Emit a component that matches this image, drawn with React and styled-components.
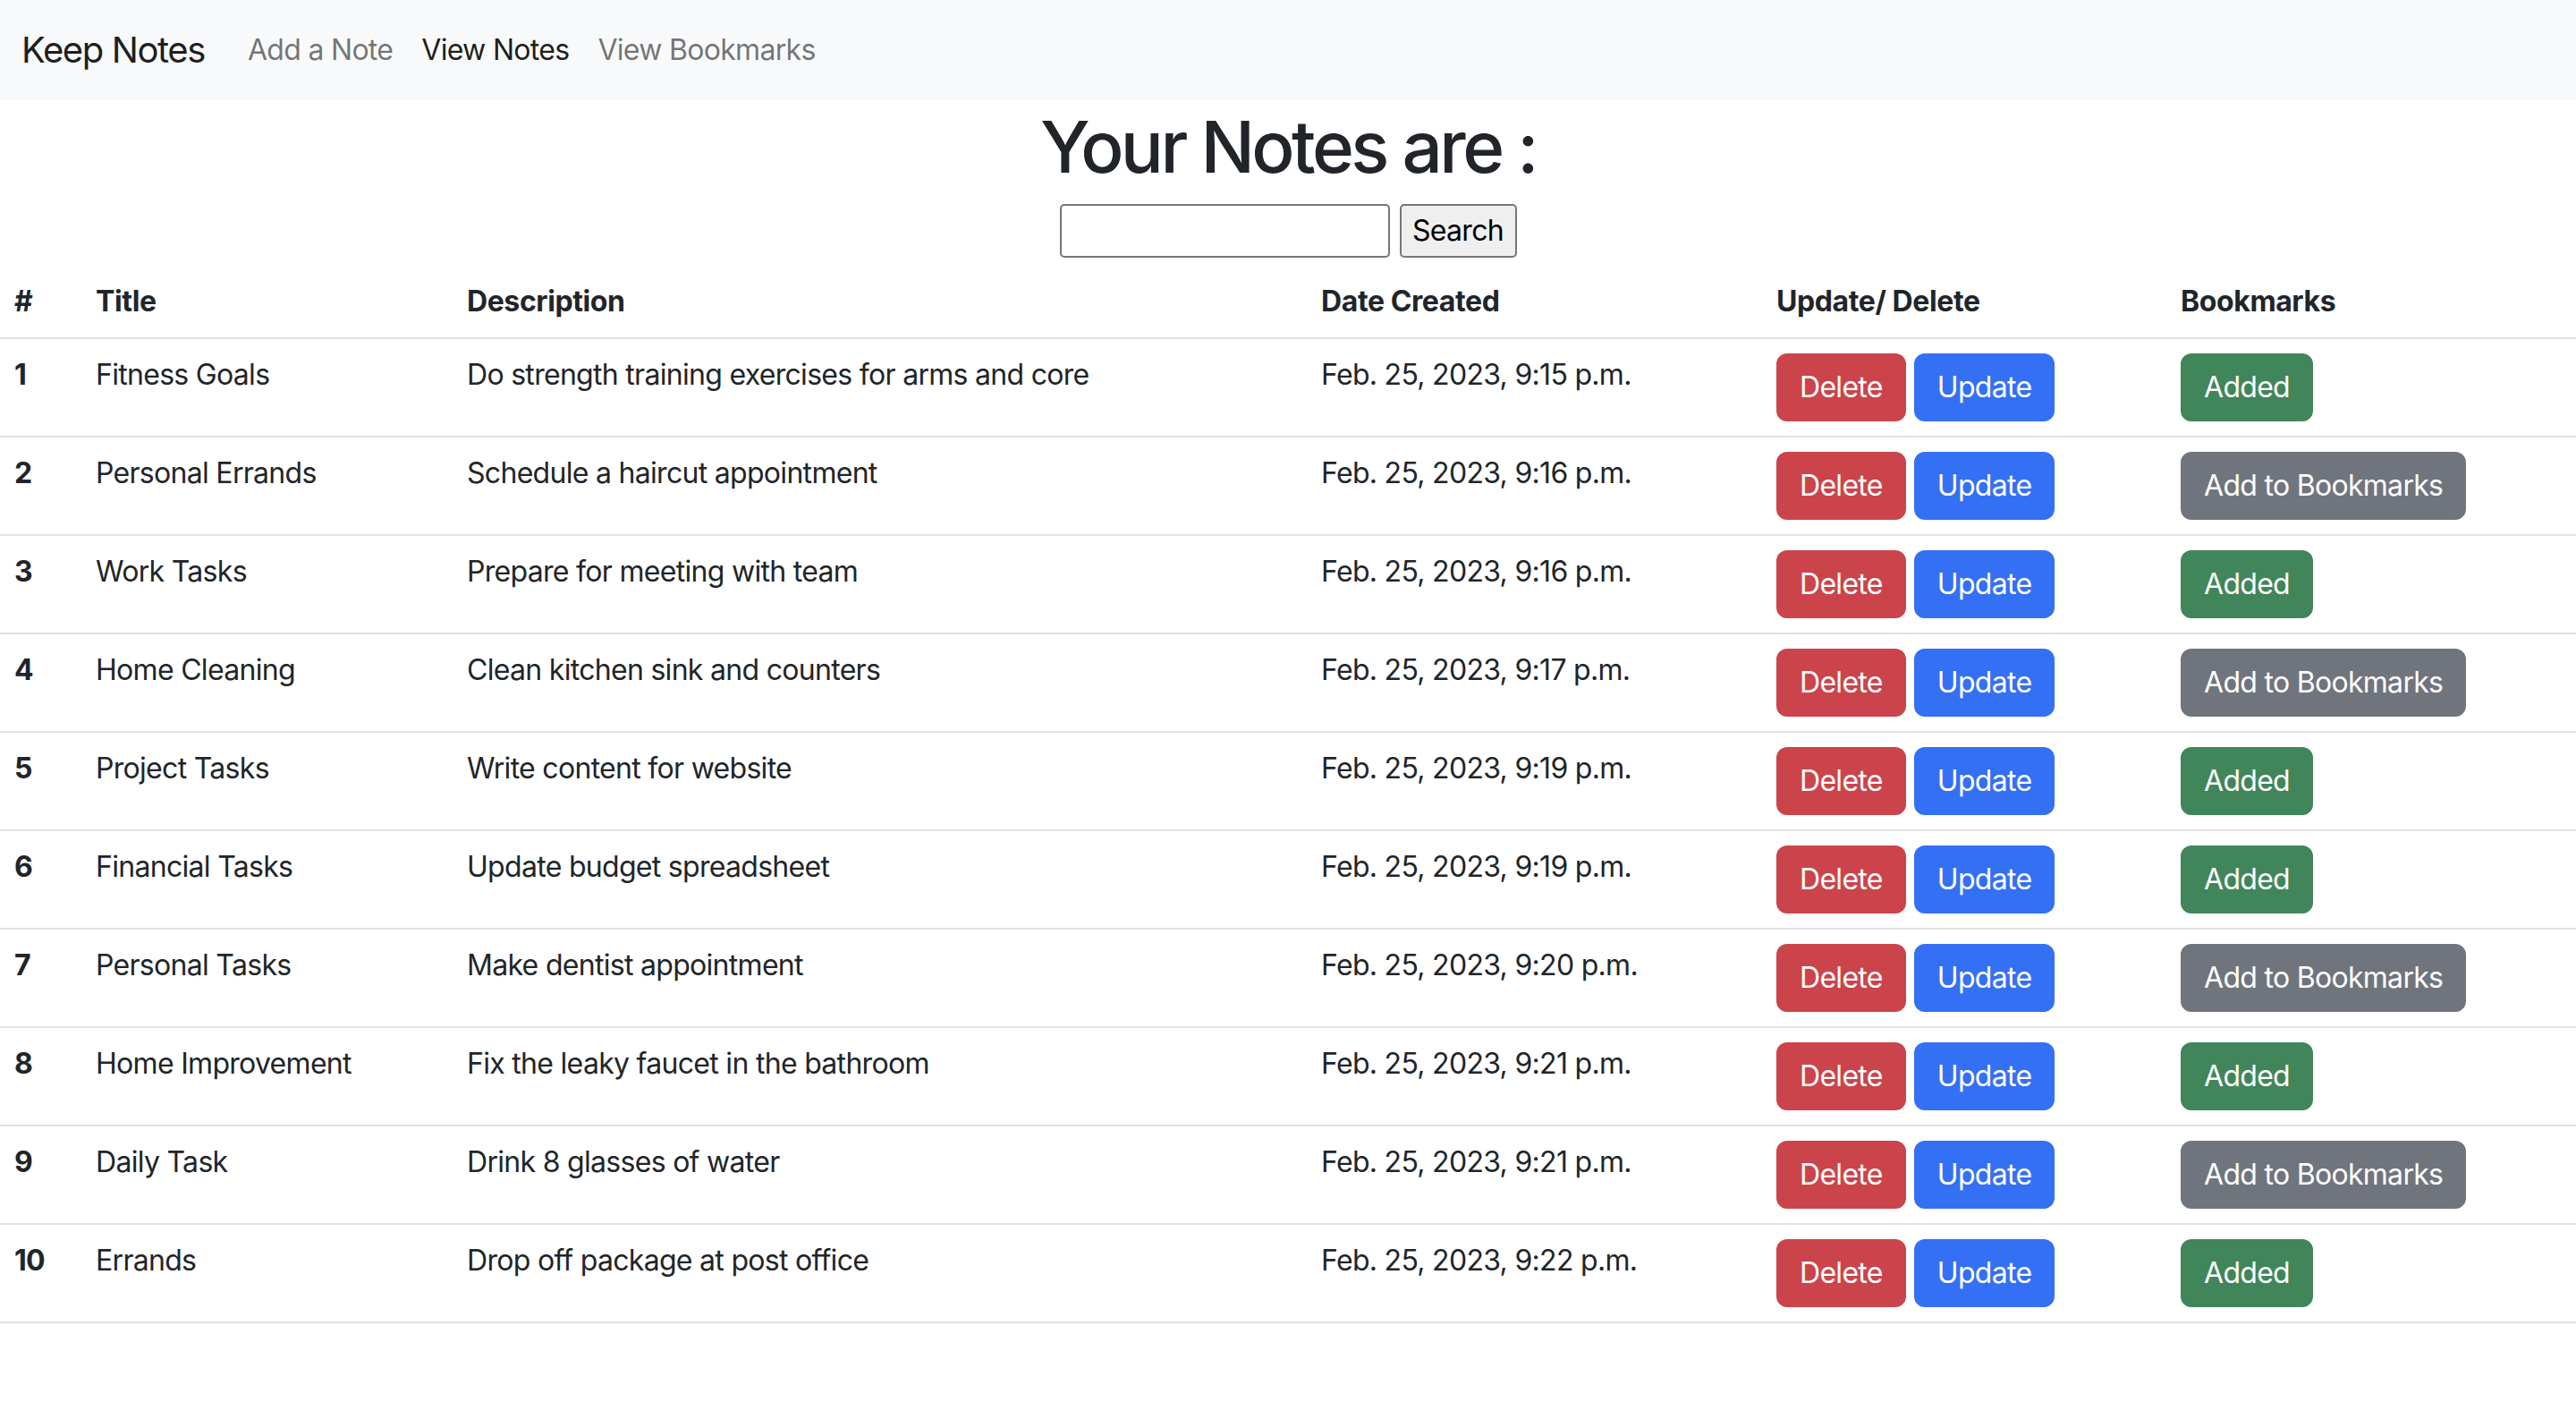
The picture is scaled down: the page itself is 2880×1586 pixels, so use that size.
import React from "react";
import styled, { createGlobalStyle } from "styled-components";

const Global = createGlobalStyle`
  html, body { margin: 0; padding: 0; background: #fff; }
  body {
    font-family: Inter, "Noto Sans", "Liberation Sans", sans-serif;
    font-size: 32px;
    line-height: 1.5;
    letter-spacing: -0.7px;
    color: #212529;
  }
  * { box-sizing: border-box; }
`;

const Navbar = styled.nav`
  display: flex;
  align-items: center;
  background: #f8f9fa;
  padding: 16px 24px;
  height: 112px;
`;

const Brand = styled.a`
  font-size: 40px;
  line-height: 60px;
  letter-spacing: -1.4px;
  padding: 10px 0;
  margin-right: 32px;
  color: rgba(0, 0, 0, 0.9);
  text-decoration: none;
`;

const NavList = styled.div`
  display: flex;
`;

const NavLink = styled.a`
  padding: 16px 16px;
  color: ${(p) => (p.$active ? "rgba(0,0,0,0.9)" : "rgba(0,0,0,0.55)")};
  text-decoration: none;
  line-height: 48px;
`;

const Heading = styled.h1`
  margin: 4px 0 16px;
  font-size: 80px;
  font-weight: 500;
  line-height: 1.2;
  letter-spacing: -3.6px;
  text-align: center;
`;

const SearchForm = styled.form`
  display: flex;
  justify-content: center;
  gap: 11px;
  margin-top: 11px;
  margin-bottom: 9px;
`;

const SearchInput = styled.input`
  width: 369px;
  height: 60px;
  border: 2px solid #767676;
  border-radius: 5px;
  padding: 2px 4px;
  font: inherit;
  background: #fff;
`;

const SearchButton = styled.button`
  width: 131px;
  height: 60px;
  border: 2px solid #767676;
  border-radius: 5px;
  background: #efefef;
  color: #000;
  font-family: inherit;
  font-size: 32px;
  letter-spacing: -0.7px;
  line-height: 1;
  padding: 0 10px;
`;

const Table = styled.table`
  width: 100%;
  border-collapse: collapse;
  table-layout: fixed;
  vertical-align: top;
`;

const Th = styled.th`
  text-align: left;
  font-weight: 700;
  letter-spacing: -0.4px;
  padding: 16px;
  line-height: 48px;
  border-bottom: 2px solid #dee2e6;
  vertical-align: bottom;
`;

const Td = styled.td`
  padding: 16px;
  line-height: 48px;
  border-bottom: 2px solid #dee2e6;
  vertical-align: top;
  font-weight: ${(p) => (p.$bold ? 700 : 400)};
  white-space: nowrap;
`;

const Actions = styled.div`
  display: flex;
  gap: 9px;
`;

const COLORS = {
  danger: "#cb444b",
  primary: "#3470f3",
  success: "#41865a",
  secondary: "#70757d",
};

const Btn = styled.button`
  font-family: inherit;
  font-size: 32px;
  line-height: 48px;
  letter-spacing: -0.7px;
  padding: 12px 24px;
  border: 2px solid ${(p) => COLORS[p.$variant]};
  background: ${(p) => COLORS[p.$variant]};
  color: #fff;
  border-radius: 12px;
  cursor: pointer;
`;

const notes = [
  ["Fitness Goals", "Do strength training exercises for arms and core", "9:15", true],
  ["Personal Errands", "Schedule a haircut appointment", "9:16", false],
  ["Work Tasks", "Prepare for meeting with team", "9:16", true],
  ["Home Cleaning", "Clean kitchen sink and counters", "9:17", false],
  ["Project Tasks", "Write content for website", "9:19", true],
  ["Financial Tasks", "Update budget spreadsheet", "9:19", true],
  ["Personal Tasks", "Make dentist appointment", "9:20", false],
  ["Home Improvement", "Fix the leaky faucet in the bathroom", "9:21", true],
  ["Daily Task", "Drink 8 glasses of water", "9:21", false],
  ["Errands", "Drop off package at post office", "9:22", true],
];

const widths = [91, 415, 955, 509, 452, 458];

export default function App() {
  return (
    <>
      <Global />
      <Navbar>
        <Brand href="#">Keep Notes</Brand>
        <NavList>
          <NavLink href="#">Add a Note</NavLink>
          <NavLink href="#" $active>View Notes</NavLink>
          <NavLink href="#">View Bookmarks</NavLink>
        </NavList>
      </Navbar>
      <Heading>Your Notes are :</Heading>
      <SearchForm onSubmit={(e) => e.preventDefault()}>
        <SearchInput type="text" />
        <SearchButton type="submit">Search</SearchButton>
      </SearchForm>
      <Table>
        <colgroup>
          {widths.map((w, i) => (
            <col key={i} style={{ width: w }} />
          ))}
        </colgroup>
        <thead>
          <tr>
            <Th>#</Th>
            <Th>Title</Th>
            <Th>Description</Th>
            <Th>Date Created</Th>
            <Th>Update/ Delete</Th>
            <Th>Bookmarks</Th>
          </tr>
        </thead>
        <tbody>
          {notes.map(([title, desc, time, added], i) => (
            <tr key={i}>
              <Td $bold>{i + 1}</Td>
              <Td>{title}</Td>
              <Td>{desc}</Td>
              <Td>Feb. 25, 2023, {time} p.m.</Td>
              <Td>
                <Actions>
                  <Btn $variant="danger">Delete</Btn>
                  <Btn $variant="primary">Update</Btn>
                </Actions>
              </Td>
              <Td>
                {added ? (
                  <Btn $variant="success">Added</Btn>
                ) : (
                  <Btn $variant="secondary">Add to Bookmarks</Btn>
                )}
              </Td>
            </tr>
          ))}
        </tbody>
      </Table>
    </>
  );
}
